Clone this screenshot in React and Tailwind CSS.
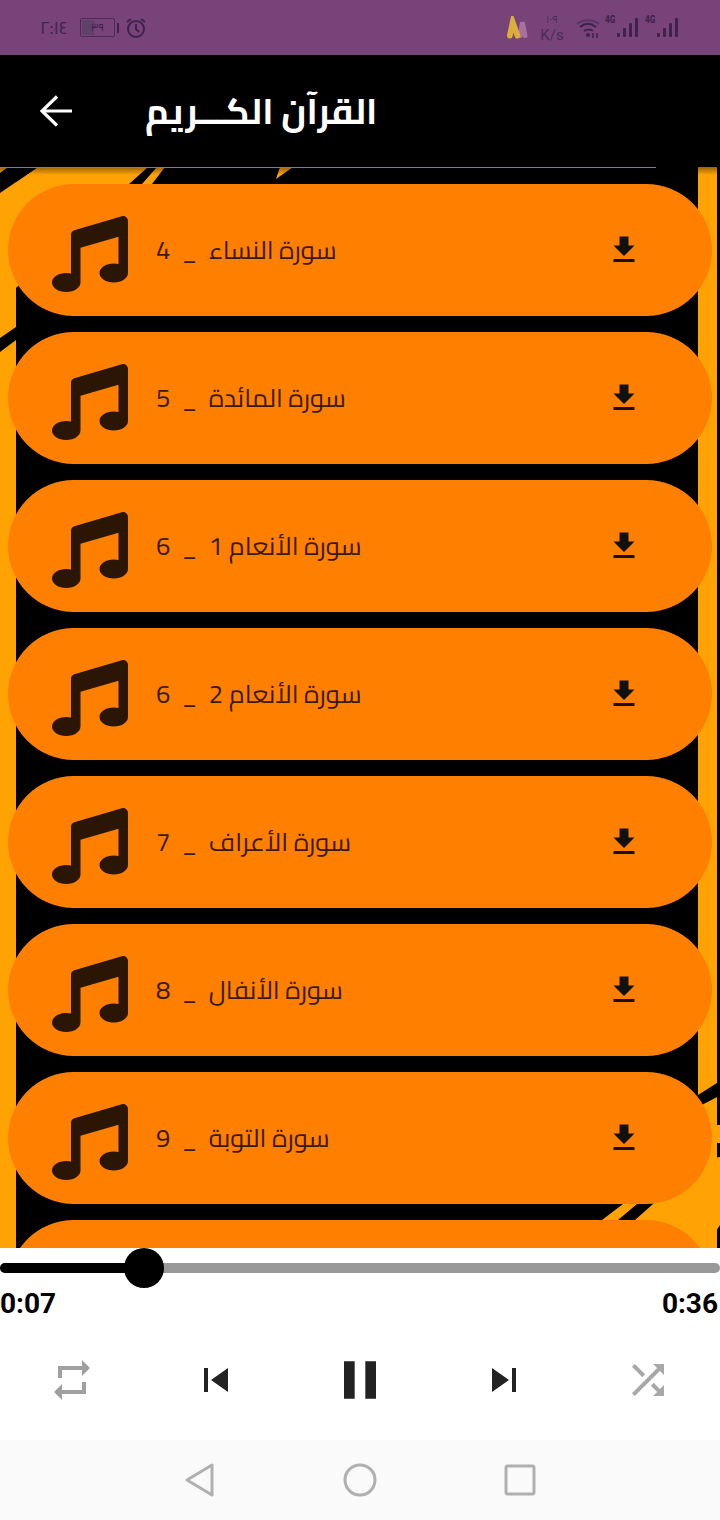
import React from 'react';
import { FaMusic } from 'react-icons/fa';

const arabicFont = "font-['Cairo','Noto_Sans_Arabic','DejaVu_Sans',sans-serif]";

const suras = [
    'سورة النساء  _  4',
    'سورة المائدة  _  5',
    'سورة الأنعام 1  _  6',
    'سورة الأنعام 2  _  6',
    'سورة الأعراف  _  7',
    'سورة الأنفال  _  8',
    'سورة التوبة  _  9',
];

const Signal = () => (
    <div className="w-[33px] flex items-start justify-between">
        <span className="w-[12px] text-[11px] leading-[12px] font-bold text-[#3f2149] font-['Roboto',sans-serif] scale-x-75 origin-left -mt-[3px]">4G</span>
        <svg width="21" height="21" viewBox="0 0 21 21" fill="#3f2149">
            <rect x="0" y="16" width="3" height="4" rx="1" />
            <rect x="6" y="11" width="3" height="9" rx="1" />
            <rect x="12" y="6" width="3" height="14" rx="1" />
            <rect x="18" y="1" width="3" height="19" rx="1" />
        </svg>
    </div>
);

const StatusBar = () => (
    <div className="h-[55px] bg-[#774379] flex items-center justify-between pl-[40px] pr-[42px] shrink-0">
        <div className="flex items-center text-[#3f2149]">
            <bdo dir="ltr" className={`text-[18px] leading-none w-[40px] ${arabicFont}`}>٢:١٤</bdo>
            <div className="flex items-center">
                <div className="w-[35px] h-[19px] border border-[#4d2b57] rounded-[2px] relative flex items-center justify-center">
                    <div className="absolute left-[1px] top-[1px] bottom-[1px] w-[12px] bg-[#5f4068]" />
                    <bdo dir="ltr" className={`relative text-[11px] leading-none ${arabicFont}`}>٣٩</bdo>
                </div>
                <div className="w-[2px] h-[10px] bg-[#3f2149] ml-[2px]" />
            </div>
            <svg className="ml-[6px]" width="22" height="22" viewBox="0 0 22 22" fill="none" stroke="#3f2149" strokeWidth="2">
                <circle cx="11" cy="12" r="8" />
                <path d="M11 7v5l3 3M2 5l4-3M20 5l-4-3" />
            </svg>
        </div>
        <div className="flex items-center">
            <svg width="23" height="24" viewBox="0 0 24 24" fill="none" strokeWidth="6" strokeLinecap="round">
                <path d="M15 20 L17 6 L20 20" stroke="#a8729f" strokeWidth="5" />
                <path d="M4 20 L7 6 L12 20" stroke="#d9ae3a" />
            </svg>
            <div className="w-[24px] ml-[11px] flex flex-col items-center text-[#4b2c55]">
                <bdo dir="ltr" className={`text-[11px] leading-[14px] ${arabicFont}`}>١٠٩</bdo>
                <span className="text-[15px] leading-[18px] font-['Roboto',sans-serif]">K/s</span>
            </div>
            <svg className="ml-[12px]" width="24" height="24" viewBox="0 0 24 24" fill="none" stroke="#3f2149" strokeWidth="2">
                <path d="M1 8c6-5 16-5 22 0" strokeOpacity="0.45" />
                <path d="M4 11c5-4 11-4 16 0M8 15c3-2 6-2 9 0" />
                <circle cx="12" cy="19" r="2" fill="#3f2149" stroke="none" />
                <path d="M17 17v5M21 17v5" strokeWidth="1.5" />
            </svg>
            <div className="ml-[5px] flex gap-[7px]">
                <Signal />
                <Signal />
            </div>
        </div>
    </div>
);

const AppBar = () => (
    <div className="h-[112px] bg-black flex items-center pl-[40px] shrink-0">
        <svg width="32" height="32" viewBox="0 0 32 32" fill="none" stroke="white" strokeWidth="3.2">
            <path d="M32 16H2M17 1.5 2 16l15 14.5" />
        </svg>
        <h1 dir="rtl" className={`ml-[73px] text-[36px] leading-none font-bold text-white ${arabicFont}`}>القرآن الكـــريم</h1>
    </div>
);

// the yellow and black artwork behind the list
const Backdrop = () => (
    <svg className="absolute inset-0" width="720" height="1081" viewBox="0 167 720 1081">
        <g fill="#ffa304">
            <rect x="0" y="167" width="16" height="1081" />
            <rect x="698" y="167" width="19" height="1081" />
            <polygon points="0,193 38,167 148,167 100,210 16,288 0,288" />
            <polygon points="157,167 165,167 152,184 142,184" />
            <polygon points="280,167 293,167 276,179" />
            <polygon points="623,1204 637,1204 618,1220 602,1220" />
            <polygon points="653,1204 698,1160 720,1157 720,1225 705,1248 600,1248 635,1220" />
            <rect x="717" y="1125" width="3" height="18" />
        </g>
        <g fill="#000000">
            <polygon points="0,173 8,167 38,167 0,193" />
            <polygon points="0,352 16,340 16,327 0,338" />
            <polygon points="698,1095 717,1083 717,1097 698,1107" />
        </g>
    </svg>
);

const SuraRow = ({ title }) => (
    <div className="h-[132px] shrink-0 rounded-full bg-[#ff8000] flex items-center pl-[44px] pr-[70px]">
        <FaMusic size={76} color="#2b1505" className="shrink-0 mt-[8px]" />
        <div className="ml-[28px] flex-1 flex justify-start">
            <span dir="rtl" className={`text-[25.5px] leading-none mt-[2px] text-[#3a1a00] whitespace-pre ${arabicFont}`}>{title}</span>
        </div>
        <svg width="36" height="36" viewBox="0 0 24 24" fill="#111111" className="shrink-0">
            <path d="M19 9h-4V3H9v6H5l7 7 7-7zM5 18v2h14v-2H5z" />
        </svg>
    </div>
);

const Player = () => (
    <div className="h-[192px] bg-white shrink-0">
        <div className="h-[40px] flex items-center relative">
            <div className="flex-1 h-[10px] rounded-full bg-[#999999] overflow-hidden">
                <div className="w-[144px] h-full bg-black" />
            </div>
            <div className="absolute left-[124px] top-0 w-[40px] h-[40px] rounded-full bg-black" />
        </div>
        <div className="flex justify-between pr-[2px] mt-[1px] text-[28px] leading-[30px] font-bold text-black font-['Roboto',sans-serif]">
            <span>0:07</span>
            <span>0:36</span>
        </div>
        <div className="grid grid-cols-5 h-[64px] mt-[29px] items-center justify-items-center">
            <svg width="48" height="48" viewBox="0 0 24 24" fill="#a0a0a0">
                <path d="M7 7h10v3l4-4-4-4v3H5v6h2V7zm10 10H7v-3l-4 4 4 4v-3h12v-6h-2v4z" />
            </svg>
            <svg width="48" height="48" viewBox="0 0 24 24" fill="#222222">
                <path d="M6 6h2v12H6zm3.5 6l8.5 6V6z" />
            </svg>
            <svg width="64" height="64" viewBox="0 0 24 24" fill="#222222">
                <path d="M6 19h4V5H6v14zm8-14v14h4V5h-4z" />
            </svg>
            <svg width="48" height="48" viewBox="0 0 24 24" fill="#222222">
                <path d="M6 18l8.5-6L6 6v12zM16 6v12h2V6h-2z" />
            </svg>
            <svg width="48" height="48" viewBox="0 0 24 24" fill="#a8a8a8">
                <path d="M10.59 9.17L5.41 4 4 5.41l5.17 5.17 1.42-1.41zM14.5 4l2.04 2.04L4 18.59 5.41 20 17.96 7.46 20 9.5V4h-5.5zm.33 9.41l-1.41 1.41 3.13 3.13L14.5 20H20v-5.5l-2.04 2.04-3.13-3.13z" />
            </svg>
        </div>
    </div>
);

const NavBar = () => (
    <div className="h-[80px] bg-[#fafafa] shrink-0 flex items-center justify-center gap-[126px]">
        <svg width="32" height="36" viewBox="0 0 32 36" fill="none" stroke="#b0b0b0" strokeWidth="3" strokeLinejoin="round">
            <path d="M28 3v30L3 18z" />
        </svg>
        <svg width="36" height="36" viewBox="0 0 36 36" fill="none" stroke="#b0b0b0" strokeWidth="3">
            <circle cx="18" cy="18" r="15" />
        </svg>
        <svg width="32" height="32" viewBox="0 0 32 32" fill="none" stroke="#b0b0b0" strokeWidth="3" strokeLinejoin="round">
            <rect x="2" y="2" width="28" height="28" rx="1.5" />
        </svg>
    </div>
);

const App = () => {
    return (
        <div className="w-[720px] h-[1520px] flex flex-col overflow-hidden bg-white">
            <StatusBar />
            <AppBar />
            <div className="relative h-[1081px] shrink-0 bg-black overflow-hidden">
                <Backdrop />
                <div className="absolute inset-x-0 top-0 h-[8px] bg-gradient-to-b from-black/40 to-transparent" />
                <div className="relative flex flex-col">
                    <div className="h-px w-[656px] bg-[#b8703a]" />
                    <div className="flex flex-col gap-[16px] pt-[16px] px-[8px]">
                        {suras.map((title) => (
                            <SuraRow key={title} title={title} />
                        ))}
                        <div className="h-[132px] shrink-0 rounded-full bg-[#ff8000]" />
                    </div>
                </div>
            </div>
            <Player />
            <NavBar />
        </div>
    );
};

export default App;
